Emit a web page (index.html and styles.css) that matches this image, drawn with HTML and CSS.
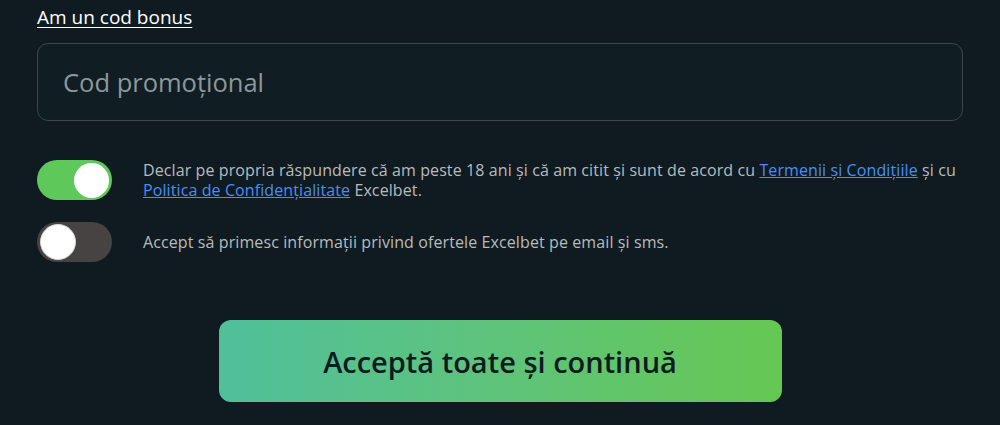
FILE: index.html
```html
<!DOCTYPE html>
<html lang="ro">
<head>
<meta charset="utf-8">
<link rel="stylesheet" href="styles.css">
</head>
<body>
<div class="page">
  <a class="bonus-link" href="#">Am un cod bonus</a>
  <div class="input-box"><span class="placeholder">Cod promoțional</span></div>
  <div class="consents">
    <div class="consent">
      <div class="toggle on"><span class="knob"></span></div>
      <p class="consent-text">Declar pe propria răspundere că am peste 18 ani și că am citit și sunt de acord cu <a href="#">Termenii și Condițiile</a> și cu <a href="#">Politica de Confidențialitate</a> Excelbet.</p>
    </div>
    <div class="consent">
      <div class="toggle off"><span class="knob"></span></div>
      <p class="consent-text">Accept să primesc informații privind ofertele Excelbet pe email și sms.</p>
    </div>
  </div>
  <div class="actions">
    <button class="cta">Acceptă toate și continuă</button>
  </div>
</div>
</body>
</html>
```
FILE: styles.css
```css
html, body {
  margin: 0;
  padding: 0;
  background: #0f1b21;
  width: 1000px;
  height: 425px;
  overflow: hidden;
}
body {
  font-family: "Open Sans", "Noto Sans", sans-serif;
}
.page {
  padding: 3px 37px 0 37px;
  display: flex;
  flex-direction: column;
}
.bonus-link {
  color: #ffffff;
  font-size: 19px;
  font-weight: 500;
  text-decoration: underline;
  text-underline-offset: 3px;
  line-height: 28px;
  align-self: flex-start;
}
.input-box {
  margin-top: 12px;
  height: 76px;
  border: 1.5px solid #3b474c;
  border-radius: 11px;
  background: #101d22;
  display: flex;
  align-items: center;
  padding-left: 25px;
}
.placeholder {
  color: #8e979b;
  font-size: 25.5px;
}
.consents {
  margin-top: 39px;
  display: flex;
  flex-direction: column;
  gap: 22px;
}
.consent {
  display: flex;
  align-items: center;
  gap: 31px;
}
.toggle {
  flex: none;
  width: 75px;
  height: 40px;
  border-radius: 20px;
  display: flex;
  align-items: center;
  box-sizing: border-box;
  padding: 0 3px;
}
.toggle.on {
  background: #5ec85a;
  justify-content: flex-end;
}
.toggle.off {
  background: #474343;
  justify-content: flex-start;
}
.knob {
  width: 35px;
  height: 35px;
  border-radius: 50%;
  background: #ffffff;
}
.toggle.off .knob {
  width: 34px;
  height: 34px;
  border: 1px solid #d8d8d8;
}
.consent-text {
  margin: 0;
  color: #b7bbbd;
  font-size: 16px;
  letter-spacing: 0.1px;
  font-weight: 500;
  line-height: 20px;
}
.consent-text a {
  color: #4b8df8;
  text-decoration: underline;
}
.actions {
  display: flex;
  justify-content: center;
  margin-top: 58px;
}
.cta {
  width: 563px;
  height: 82px;
  border: none;
  border-radius: 12px;
  background: linear-gradient(90deg, #50c09b 0%, #5ec37a 50%, #66c852 100%);
  color: #0f1b21;
  font-family: "Open Sans", "Noto Sans", sans-serif;
  font-size: 29px;
  font-weight: 600;
  cursor: pointer;
}
```
